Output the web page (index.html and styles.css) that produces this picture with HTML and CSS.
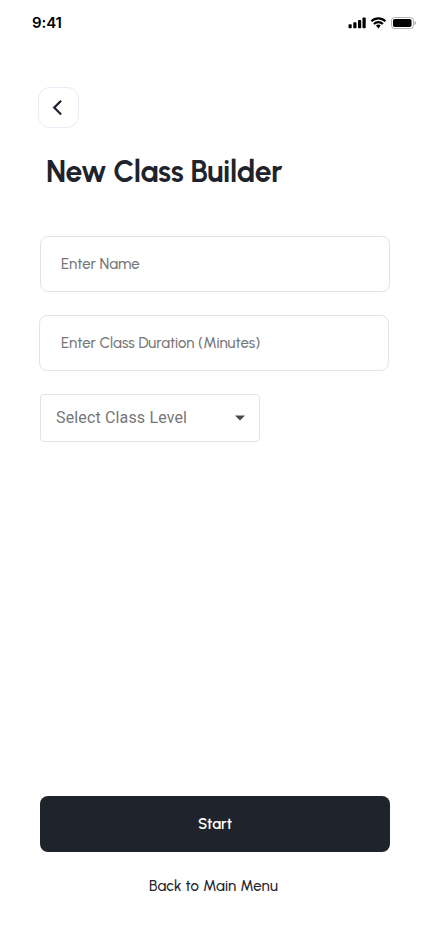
FILE: index.html
```html
<!DOCTYPE html>
<html lang="en">
<head>
<meta charset="utf-8">
<meta name="viewport" content="width=device-width, initial-scale=1">
<title>New Class Builder</title>
<link rel="stylesheet" href="styles.css">
</head>
<body>
<div class="screen">
  <header class="status-bar">
    <span class="time">9:41</span>
    <svg class="status-icons" width="68" height="14" viewBox="0 0 68 14">
      <g fill="#000">
        <rect x="0.5" y="8.3" width="3.2" height="4" rx="0.8"/>
        <rect x="5.3" y="6.3" width="3.2" height="6" rx="0.8"/>
        <rect x="10" y="4" width="3.2" height="8.3" rx="0.8"/>
        <rect x="14.5" y="1.5" width="3.2" height="10.8" rx="0.8"/>
        <path d="M28 9.5 a3.7 3.7 0 0 1 4.8 0 L30.4 12.4 Z"/>
      </g>
      <path d="M23.4 5.2 a10 10 0 0 1 14 0 M25.9 7.9 a6.5 6.5 0 0 1 9 0" fill="none" stroke="#000" stroke-width="2.1"/>
      <rect x="43.5" y="1.5" width="22" height="11" rx="3.2" fill="none" stroke="#000" stroke-opacity=".3"/>
      <rect x="45" y="3" width="18.5" height="8" rx="1.8"/>
      <path d="M66.6 5 v4 a2.2 2.2 0 0 0 0 -4" fill="#000" fill-opacity=".4"/>
    </svg>
  </header>
  <button class="back" aria-label="Back">
    <svg width="20" height="20" viewBox="0 0 20 20"><path d="M12.1 2.7 L5.2 9.6 L12.1 16.5" fill="none" stroke="#1e232c" stroke-width="2.2"/></svg>
  </button>
  <h1 class="title">New Class Builder</h1>
  <main class="form">
    <div class="field"><span>Enter Name</span></div>
    <div class="field duration"><span>Enter Class Duration (Minutes)</span></div>
    <div class="select">
      <span class="select-label">Select Class Level</span>
      <svg width="10" height="6" viewBox="0 0 10 6"><path d="M0 .5 H10 L5 5.5 Z" fill="#494949"/></svg>
    </div>
  </main>
  <footer class="actions">
    <button class="start"><span>Start</span></button>
    <a class="menu-link">Back to Main Menu</a>
  </footer>
</div>
</body>
</html>
```
FILE: styles.css
```css
* { box-sizing: border-box; }
body { margin: 0; background: #fff; color: #1e232c; font-family: Urbanist, Lato, sans-serif; }
button { padding: 0; font: inherit; }
svg { display: block; flex: none; }
.screen { height: 932px; display: flex; flex-direction: column; align-items: flex-start; overflow: hidden; }
.status-bar { width: 100%; height: 46px; padding: 0 14px 0 32px; display: flex; justify-content: space-between; align-items: center; color: #000; }
.time { font: 600 15px/20px Inter, sans-serif; letter-spacing: -0.1px; }
.back { width: 41px; height: 41px; margin: 41px 0 0 38px; display: flex; align-items: center; justify-content: center; border: 1px solid #e8ecf4; border-radius: 12px; background: #fff; }
.title { height: 40px; margin: 24px 0 0 46px; font-size: 30px; line-height: 40px; font-weight: 700; letter-spacing: -0.3px; white-space: nowrap; }
.form { margin: 44px 0 0 40px; display: flex; flex-direction: column; gap: 23px; }
.field { width: 350px; height: 56px; padding-left: 20px; display: flex; align-items: center; border: 1px solid #e4e4e4; border-radius: 8px; font-size: 15px; font-weight: 500; color: #777; white-space: nowrap; }
.duration { margin-left: -1px; padding-left: 21px; }
.select { width: 220px; height: 48px; padding: 0 14px 0 15px; display: flex; align-items: center; justify-content: space-between; border: 1px solid #e4e4e4; border-radius: 4px; font: 16px Roboto, sans-serif; letter-spacing: 0.15px; color: #777; }
.select-label { padding-bottom: 2px; }
.actions { width: 350px; margin: auto 0 36px 40px; display: flex; flex-direction: column; align-items: center; gap: 24px; }
.start { width: 100%; height: 56px; border: 0; border-radius: 8px; background: #1e232c; color: #fff; font-size: 15px; font-weight: 600; }
.menu-link { height: 20px; margin-right: 3px; font-size: 15px; line-height: 20px; font-weight: 500; letter-spacing: 0.17px; white-space: nowrap; }
```
